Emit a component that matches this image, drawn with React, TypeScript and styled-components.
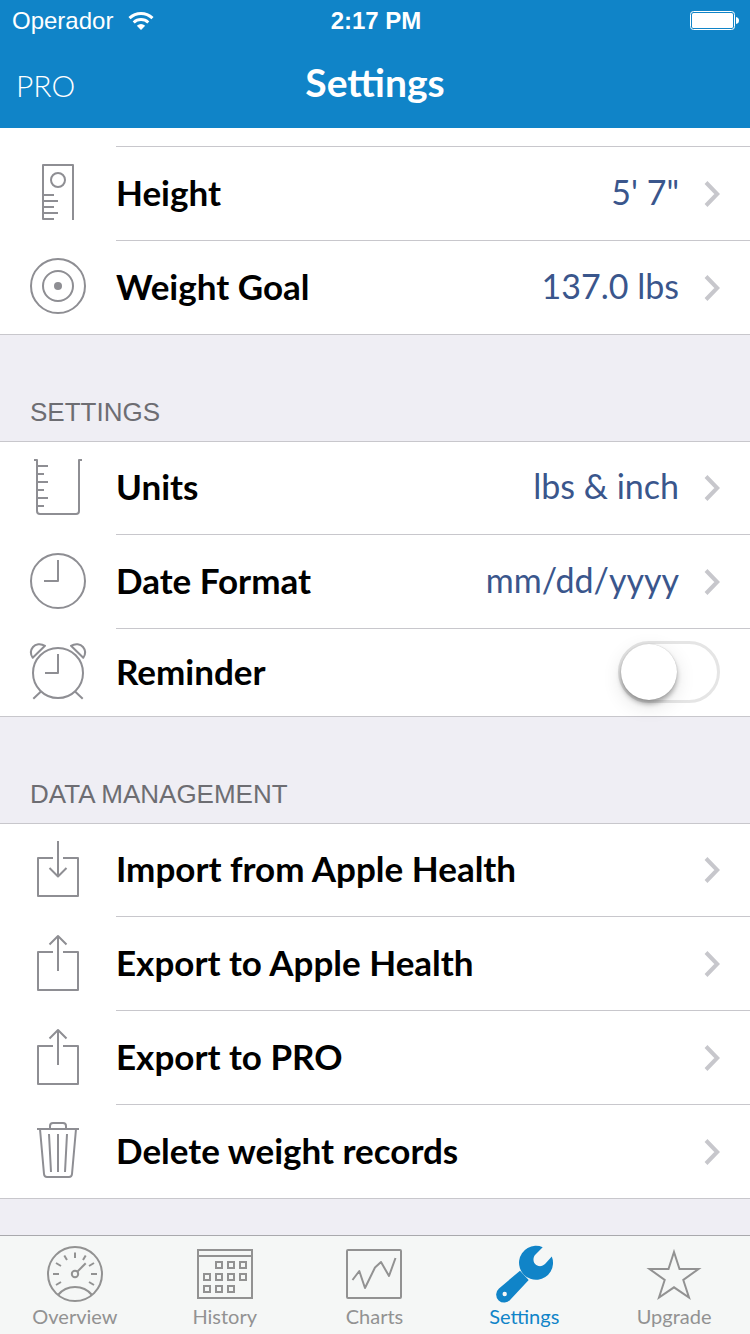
import React from "react";
import styled, { createGlobalStyle } from "styled-components";

const BLUE = "#1084c8";
const AVENIR = `"Avenir Next", Lato, "Open Sans", sans-serif`;
const HELVETICA = `"Helvetica Neue", "Liberation Sans", Arial, sans-serif`;

const GlobalStyle = createGlobalStyle`
  *, *::before, *::after { box-sizing: border-box; }
  body { margin: 0; background: #efeef4; font-family: ${AVENIR}; color: #000; }
  button { font: inherit; color: inherit; background: none; border: 0; padding: 0; margin: 0; text-align: left; cursor: pointer; }
  ul { list-style: none; margin: 0; padding: 0; }
  h1, h2 { margin: 0; }
  svg { display: block; flex: none; overflow: visible; }
`;

const Page = styled.div`
  min-height: 100vh;
  display: flex;
  flex-direction: column;
`;

const Header = styled.header`
  background: ${BLUE};
  color: #fff;
`;

const StatusBar = styled.div`
  display: grid;
  grid-template-columns: 1fr auto 1fr;
  align-items: center;
  height: 40px;
  padding: 2px 10px 0 12px;
  font: 24px/28px ${HELVETICA};
`;

const Carrier = styled.span`
  display: flex;
  align-items: center;
  gap: 15px;
`;

const Clock = styled.time`
  font-weight: 700;
`;

const BatterySlot = styled.span`
  justify-self: end;
`;

const NavBar = styled.div`
  display: grid;
  grid-template-columns: 1fr auto 1fr;
  align-items: baseline;
  height: 88px;
  padding: 18px 16px 0;
`;

const ProButton = styled.button`
  justify-self: start;
  && {
    font-size: 30px;
    font-weight: 300;
    line-height: 48px;
  }
`;

const Title = styled.h1`
  font-size: 39px;
  font-weight: 700;
  line-height: 48px;
`;

const Content = styled.main`
  flex: 1;
  padding-bottom: 36px;
`;

const SectionTitle = styled.h2`
  padding: 61px 30px 13px;
  font: 400 26px/32px ${HELVETICA};
  color: #6d6d72;
`;

const Group = styled.ul<{ $continued?: boolean }>`
  background: #fff;
  border-bottom: 1px solid #c8c7cc;
  border-top: ${(p) => (p.$continued ? "0" : "1px solid #c8c7cc")};
  padding-top: ${(p) => (p.$continued ? "18px" : "0")};
`;

const RowShell = styled.li`
  display: flex;
  > * {
    display: flex;
    flex: 1;
    min-width: 0;
  }
`;

const IconCell = styled.span`
  width: 116px;
  flex: none;
  display: flex;
  align-items: center;
  padding: 0 30px 3px;
  color: #8e8e93;
`;

const RowBody = styled.span<{ $line: "none" | "top" | "bottom"; $height: number }>`
  flex: 1;
  min-width: 0;
  display: flex;
  align-items: center;
  min-height: ${(p) => p.$height}px;
  padding-right: 30px;
  border-style: solid;
  border-color: #c8c7cc;
  border-width: ${(p) => (p.$line === "top" ? "1px 0 0" : p.$line === "bottom" ? "0 0 1px" : "0")};
`;

const RowLabel = styled.span`
  flex: 1;
  padding-bottom: 4px;
  font-size: 35px;
  font-weight: 700;
  line-height: 44px;
`;

const RowValue = styled.span`
  margin-right: 25px;
  padding-bottom: 4px;
  font-size: 34px;
  font-weight: 400;
  line-height: 44px;
  color: #3a568c;
`;

const Switch = styled.input`
  appearance: none;
  flex: none;
  width: 102px;
  height: 62px;
  margin: 0 0 2px;
  padding: 0;
  border: 3px solid #e5e5e5;
  border-radius: 31px;
  background: #fff;
  cursor: pointer;
  &::before {
    content: "";
    display: block;
    width: 56px;
    height: 56px;
    border-radius: 50%;
    background: #fff;
    box-shadow: 0 0 1px rgba(0, 0, 0, 0.25), 0 4px 5px rgba(0, 0, 0, 0.3), 0 6px 20px rgba(0, 0, 0, 0.12);
  }
  &:checked {
    background: #4cd964;
    border-color: #4cd964;
  }
  &:checked::before {
    margin-left: 40px;
  }
`;

const TabBar = styled.nav`
  display: grid;
  grid-template-columns: repeat(5, 1fr);
  background: #f5f7f6;
  border-top: 1px solid #a9a9ad;
  padding: 10px 1px 5px 0;
`;

const Tab = styled.a<{ $active?: boolean }>`
  display: flex;
  flex-direction: column;
  align-items: center;
  gap: 2px;
  font-size: 20px;
  line-height: 25px;
  text-decoration: none;
  color: ${(p) => (p.$active ? BLUE : "#929292")};
`;

type IconProps = { children: React.ReactNode; join?: "round" | "miter" };

function Icon({ children, join = "round" }: IconProps) {
  return (
    <svg width="56" height="56" viewBox="0 0 56 56" fill="none" stroke="currentColor" strokeWidth="2" strokeLinejoin={join} aria-hidden="true">
      {children}
    </svg>
  );
}

const RulerIcon = () => (
  <Icon>
    <path d="M43 56V1H13V55H24M13 31H24M13 37H28M13 43H24M13 49H28" />
    <circle cx="28" cy="16" r="7" />
  </Icon>
);

const TargetIcon = () => (
  <Icon>
    <circle cx="28" cy="28" r="27" />
    <circle cx="28" cy="28" r="15" />
    <circle cx="28" cy="28" r="4" fill="currentColor" stroke="none" />
  </Icon>
);

const BeakerIcon = () => (
  <Icon>
    <path d="M4 1H7V52Q7 55 10 55H46Q49 55 49 52V1H52" />
    <path d="M7 7H18M7 15H14M7 23H18M7 31H14M7 39H18M7 47H14" />
  </Icon>
);

const ClockIcon = () => (
  <Icon>
    <circle cx="28" cy="28" r="27" />
    <path d="M28 7V28H14" />
  </Icon>
);

const AlarmIcon = () => (
  <Icon>
    <circle cx="28" cy="30" r="25" />
    <path d="M28 11V30H15" />
    <path d="M10.7 48.7L3.3 55.7M45.3 48.7L52.7 55.7" />
    <path d="M2.7 14.8L15 2.8C10.5 0 5.5 1 3 4C.3 7.2 .5 11.5 2.7 14.8Z" />
    <path d="M53.3 14.8L41 2.8C45.5 0 50.5 1 53 4C55.7 7.2 55.5 11.5 53.3 14.8Z" />
  </Icon>
);

const ImportIcon = () => (
  <Icon>
    <path d="M23 17H8V55H48V17H33" />
    <path d="M28 0V35M19.5 27L28 35.5L36.5 27" />
  </Icon>
);

const ExportIcon = () => (
  <Icon>
    <path d="M23 17H8V55H48V17H33" />
    <path d="M28 36V1M19.5 9.5L28 1L36.5 9.5" />
  </Icon>
);

const TrashIcon = () => (
  <Icon>
    <path d="M7 7H49M20 7V4Q20 1 23 1H33Q36 1 36 4V7" />
    <path d="M10 7L14 52Q14.3 55 17 55H39Q41.7 55 42 52L46 7" />
    <path d="M19 12L21 50M28 12V50M37 12L35 50" />
  </Icon>
);

const GaugeIcon = () => (
  <Icon>
    <circle cx="28" cy="28" r="27" />
    <circle cx="28" cy="28" r="3.2" />
    <path d="M30.3 25.7L38.7 17.3" />
    <path d="M28 6.5V12M17.3 9.5L20 14M38.7 9.5L36 14M9 17L14 20M47 17L42 20M6 28H12M44 28H50M9 39L14 36M47 39L42 36" />
    <path d="M11 49Q17.5 41 28 41Q38.5 41 45 49" />
  </Icon>
);

const DAYS = [
  [18, 15], [30, 15], [42, 15],
  [6, 27], [18, 27], [30, 27], [42, 27],
  [6, 39], [18, 39], [30, 39],
];

const CalendarIcon = () => (
  <Icon join="miter">
    <rect x="1" y="4" width="54" height="48" />
    <path d="M1 10H55" />
    {DAYS.map(([x, y]) => (
      <rect key={`${x}-${y}`} x={x + 1} y={y + 1} width="6" height="6" />
    ))}
  </Icon>
);

const ChartIcon = () => (
  <Icon>
    <rect x="1" y="4" width="54" height="48" rx="1" />
    <path d="M6.5 34L13.3 25L19 42L29 21.5L35 16L43 30L49.5 12" />
  </Icon>
);

const WrenchIcon = () => (
  <Icon>
    <g fill="currentColor" stroke="none">
      <path d="M46.7 1.2L39.5 8.5C36 12 37 19 42.5 20C45 20.5 47.5 19.5 49 18L55.8 10.5A17 17 0 1 1 46.7 1.2Z" />
      <path fillRule="evenodd" d="M24 24.7L32.7 34L14.5 53.5A8 8 0 1 1 3 42.5ZM8.7 45.8A2.2 2.2 0 1 0 8.7 50.2A2.2 2.2 0 1 0 8.7 45.8Z" />
    </g>
  </Icon>
);

const StarIcon = () => (
  <Icon join="miter">
    <path d="M28 6L33.5 23H52.5L37.3 34L43 51.5L28 41.3L13 51.5L18.7 34L3.5 23H22.5Z" />
  </Icon>
);

const Chevron = () => (
  <svg width="16" height="28" viewBox="0 0 16 28" fill="none" stroke="#c7c7cc" strokeWidth="4" aria-hidden="true">
    <path d="M2 2.5L13.2 14L2 25.5" />
  </svg>
);

const WifiIcon = () => (
  <svg width="26" height="20" viewBox="0 0 26 20" fill="none" stroke="#fff" strokeWidth="3" aria-hidden="true">
    <path d="M1.5 7.2Q6.5 2.5 13 2.5Q19.5 2.5 24.5 7.2" />
    <path d="M5.7 11.5Q8.8 8.6 13 8.6Q17.2 8.6 20.3 11.5" />
    <path d="M8.8 14.7Q13 11.3 17.2 14.7L13 19Z" fill="#fff" stroke="none" />
  </svg>
);

const BatteryIcon = () => (
  <svg width="50" height="20" viewBox="0 0 50 20" role="img" aria-label="Battery full">
    <rect x="0.5" y="0.5" width="44" height="18" rx="3" fill="none" stroke="#fff" />
    <rect x="2" y="2" width="41" height="15" rx="1.5" fill="#fff" />
    <path d="M46 6Q49 6.5 49 9.5Q49 12.5 46 13Z" fill="#fff" />
  </svg>
);

type RowProps = { icon: React.ReactNode; label: string; value?: string; line?: "none" | "top" | "bottom"; height?: number };

function Row({ icon, label, value, line = "bottom", height = 94 }: RowProps) {
  return (
    <RowShell>
      <button type="button">
        <IconCell>{icon}</IconCell>
        <RowBody $line={line} $height={height}>
          <RowLabel>{label}</RowLabel>
          {value && <RowValue>{value}</RowValue>}
          <Chevron />
        </RowBody>
      </button>
    </RowShell>
  );
}

const TABS = [
  { label: "Overview", icon: <GaugeIcon /> },
  { label: "History", icon: <CalendarIcon /> },
  { label: "Charts", icon: <ChartIcon /> },
  { label: "Settings", icon: <WrenchIcon />, active: true },
  { label: "Upgrade", icon: <StarIcon /> },
];

export default function App() {
  return (
    <Page>
      <GlobalStyle />
      <Header>
        <StatusBar>
          <Carrier>
            Operador
            <WifiIcon />
          </Carrier>
          <Clock>2:17 PM</Clock>
          <BatterySlot>
            <BatteryIcon />
          </BatterySlot>
        </StatusBar>
        <NavBar>
          <ProButton type="button">PRO</ProButton>
          <Title>Settings</Title>
        </NavBar>
      </Header>

      <Content>
        <Group $continued>
          <Row icon={<RulerIcon />} label="Height" value={`5' 7"`} line="top" />
          <Row icon={<TargetIcon />} label="Weight Goal" value="137.0 lbs" line="top" />
        </Group>

        <SectionTitle>SETTINGS</SectionTitle>
        <Group>
          <Row icon={<BeakerIcon />} label="Units" value="lbs & inch" height={93} />
          <Row icon={<ClockIcon />} label="Date Format" value="mm/dd/yyyy" />
          <RowShell>
            <label>
              <IconCell>
                <AlarmIcon />
              </IconCell>
              <RowBody $line="none" $height={87}>
                <RowLabel>Reminder</RowLabel>
                <Switch type="checkbox" role="switch" />
              </RowBody>
            </label>
          </RowShell>
        </Group>

        <SectionTitle>DATA MANAGEMENT</SectionTitle>
        <Group>
          <Row icon={<ImportIcon />} label="Import from Apple Health" height={93} />
          <Row icon={<ExportIcon />} label="Export to Apple Health" />
          <Row icon={<ExportIcon />} label="Export to PRO" />
          <Row icon={<TrashIcon />} label="Delete weight records" line="none" height={93} />
        </Group>
      </Content>

      <TabBar>
        {TABS.map((tab) => (
          <Tab key={tab.label} href={`#${tab.label.toLowerCase()}`} $active={tab.active} aria-current={tab.active ? "page" : undefined}>
            {tab.icon}
            {tab.label}
          </Tab>
        ))}
      </TabBar>
    </Page>
  );
}
